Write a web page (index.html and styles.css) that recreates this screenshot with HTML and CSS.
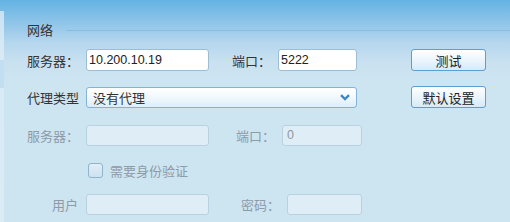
FILE: index.html
```html
<!DOCTYPE html>
<html lang="zh-CN">
  <head>
    <meta charset="UTF-8" />
    <title>网络设置</title>
    <link rel="stylesheet" href="styles.css">
  </head>
  <body>
    <div class="side-strip">
      <div class="strip-mark"></div>
    </div>
    <section class="panel">
      <div class="legend">
        <span class="legend-title">网络</span>
        <span class="legend-line"></span>
      </div>

      <div class="row row-server">
        <label class="label">服务器：</label>
        <input class="field field-host" type="text" value="10.200.10.19" />
        <label class="label label-port">端口：</label>
        <input class="field field-port" type="text" value="5222" />
        <button class="btn">测试</button>
      </div>

      <div class="row row-proxy">
        <label class="label">代理类型</label>
        <div class="select">
          <span>没有代理</span>
          <svg class="chevron" width="10" height="7" viewBox="0 0 10 7">
            <path d="M1 1.2 L5 5 L9 1.2" fill="none" stroke="#3f86c6" stroke-width="2.4" />
          </svg>
        </div>
        <button class="btn">默认设置</button>
      </div>

      <div class="row row-disabled">
        <label class="label off">服务器：</label>
        <div class="field off-field field-host"></div>
        <label class="label off label-port2">端口：</label>
        <div class="field off-field field-port2"><span class="zero">0</span></div>
      </div>

      <div class="row row-check">
        <span class="checkbox"></span>
        <span class="off check-text">需要身份验证</span>
      </div>

      <div class="row row-user">
        <label class="label off label-user">用户</label>
        <div class="field off-field field-host"></div>
        <label class="label off label-pass">密码：</label>
        <div class="field off-field field-pass"></div>
      </div>
    </section>
  </body>
</html>
```

FILE: styles.css
```css
* {
  margin: 0;
  padding: 0;
  box-sizing: border-box;
}

body {
  width: 510px;
  height: 222px;
  overflow: hidden;
  display: flex;
  font-family: "Noto Sans CJK SC", "DejaVu Sans", sans-serif;
  font-size: 13px;
  color: #333;
  background: linear-gradient(#63b3e3 0px, #8ec4e8 22px, #b4d6ee 42px, #c9e1f0 62px, #cde4f1 80px);
}

.side-strip {
  width: 4px;
  margin-top: 11px;
  background: linear-gradient(#c8e2f4 0, #d7eaf6 40px, #dcecf7);
}
.strip-mark {
  height: 28px;
  margin-top: 49px;
  background: #c3def1;
}

.panel {
  flex: 1;
  padding-left: 23px;
}

.legend {
  display: flex;
  align-items: center;
  height: 22px;
  margin-top: 19px;
}
.legend-title {
  line-height: 22px;
}
.legend-line {
  flex: 1;
  height: 1px;
  margin-left: 13px;
  background: #86bde2;
}

.row {
  display: flex;
  align-items: center;
}
.row-server {
  margin-top: 8px;
  height: 22px;
}
.row-proxy {
  margin-top: 15px;
  height: 22px;
}
.row-disabled {
  margin-top: 16px;
  height: 22px;
}
.row-check {
  margin-top: 16px;
  height: 16px;
  padding-left: 61px;
}
.row-user {
  margin-top: 15px;
  height: 22px;
}

.label {
  width: 59px;
  white-space: nowrap;
}
.off {
  color: #8d9ba7;
}
.label-port {
  margin-left: 23px;
  width: 46px;
}
.label-port2 {
  margin-left: 27px;
  width: 46px;
}
.label-user {
  text-align: right;
  padding-right: 8px;
}
.label-pass {
  margin-left: 32px;
  width: 46px;
}

.field {
  height: 22px;
  border: 1px solid #9dbdd4;
  border-radius: 3px;
  background: #fff;
  font-family: "Liberation Sans", sans-serif;
  font-size: 12.5px;
  color: #222;
  padding: 0 2px;
  outline: none;
}
.field-host {
  width: 123px;
}
.field-port {
  width: 79px;
}
.field-port2 {
  width: 80px;
}
.field-pass {
  width: 75px;
}
.off-field {
  height: 21px;
  background: #dfedf6;
  border-color: #b9d2e2;
  display: flex;
  align-items: center;
}
.zero {
  padding-left: 2px;
  color: #8e98a2;
  font-family: "Liberation Sans", sans-serif;
}

.btn {
  width: 75px;
  height: 22px;
  margin-left: auto;
  margin-right: 24px;
  border: 1px solid #5b9fd9;
  border-radius: 3px;
  background: linear-gradient(#ffffff, #e9f4fc 55%, #d6eaf9);
  font-family: "Noto Sans CJK SC", sans-serif;
  font-size: 13px;
  color: #222;
}

.select {
  width: 271px;
  height: 21px;
  display: flex;
  align-items: center;
  justify-content: space-between;
  padding: 0 6px 0 6px;
  border: 1px solid #84b3d8;
  border-radius: 3px;
  background: linear-gradient(#ffffff, #f1f8fd 50%, #dcedf9);
}
.chevron {
  margin-top: 1px;
}

.checkbox {
  width: 15px;
  height: 15px;
  border: 1px solid #90b4cc;
  border-radius: 3px;
  background: linear-gradient(#e1eef7, #cde2f0);
}
.check-text {
  margin-left: 7px;
}
```
